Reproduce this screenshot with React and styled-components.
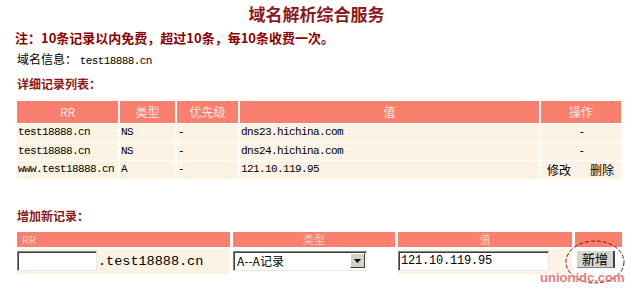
import React from "react";
import styled, { createGlobalStyle } from "styled-components";

const GlobalStyle = createGlobalStyle`
  body {
    margin: 0;
    background: #fff;
    font-family: "Noto Sans CJK SC", sans-serif;
  }
`;

const records = [
  { rr: "test18888.cn", type: "NS", prio: "-", value: "dns23.hichina.com", ops: false },
  { rr: "test18888.cn", type: "NS", prio: "-", value: "dns24.hichina.com", ops: false },
  { rr: "www.test18888.cn", type: "A", prio: "-", value: "121.10.119.95", ops: true },
];

export default function App() {
  return (
    <>
      <GlobalStyle />
      <Page>
        <Title>域名解析综合服务</Title>
        <Note>注：10条记录以内免费，超过10条，每10条收费一次。</Note>
        <Info>
          域名信息： <Mono>test18888.cn</Mono>
        </Info>
        <Section>详细记录列表：</Section>
        <RecordTable>
          <HeadCell>RR</HeadCell>
          <HeadCell>类型</HeadCell>
          <HeadCell>优先级</HeadCell>
          <HeadCell>值</HeadCell>
          <HeadCell>操作</HeadCell>
          {records.map((r, i) => (
            <React.Fragment key={i}>
              <Cell>{r.rr}</Cell>
              <Cell>{r.type}</Cell>
              <Cell>{r.prio}</Cell>
              <Cell>{r.value}</Cell>
              {r.ops ? (
                <OpsCell>
                  <OpLink>修改</OpLink>
                  <OpLink>删除</OpLink>
                </OpsCell>
              ) : (
                <Cell center>-</Cell>
              )}
            </React.Fragment>
          ))}
        </RecordTable>

        <Section top={29}>增加新记录：</Section>
        <AddTable>
          <AddHead left>RR</AddHead>
          <AddHead>类型</AddHead>
          <AddHead>值</AddHead>
          <AddHead />
          <AddCell>
            <TextBox width={80} />
            <Suffix>.test18888.cn</Suffix>
          </AddCell>
          <AddCell white>
            <FakeSelect>
              <span>A--A记录</span>
              <Arrow>
                <svg width="7" height="4" viewBox="0 0 7 4">
                  <path d="M0 0h7L3.5 4z" fill="#000" />
                </svg>
              </Arrow>
            </FakeSelect>
          </AddCell>
          <AddCell>
            <TextBox width={151} defaultValue="121.10.119.95" />
          </AddCell>
          <AddCell white>
            <AddButton>新增</AddButton>
          </AddCell>
        </AddTable>

        <Circle width="63" height="52" viewBox="0 0 63 52">
          <ellipse cx="32" cy="24" rx="29" ry="21" fill="none" stroke="#7a1212" strokeWidth="1" strokeDasharray="4 2" />
        </Circle>
        <Watermark>unionidc.com</Watermark>
      </Page>
    </>
  );
}

const Page = styled.div`
  position: relative;
  width: 625px;
  height: 289px;
  box-sizing: border-box;
  padding: 3px 3px 0 17px;
  overflow: hidden;
`;

const Title = styled.div`
  text-align: center;
  font-size: 17px;
  font-weight: 700;
  line-height: 22px;
  color: #8b1a1a;
  padding-right: 6px;
`;

const Note = styled.div`
  margin-top: 5px;
  margin-left: -2px;
  font-size: 13px;
  font-weight: 700;
  line-height: 16px;
  color: #8b0000;
`;

const Info = styled.div`
  margin-top: 5px;
  font-size: 12px;
  line-height: 16px;
  color: #000;
`;

const Mono = styled.span`
  font-family: "Liberation Mono", monospace;
  font-size: 11px;
  letter-spacing: -0.6px;
`;

const Section = styled.div`
  margin-top: ${(p) => p.top || 7}px;
  font-size: 12px;
  font-weight: 700;
  line-height: 16px;
  color: #8b1a1a;
`;

const RecordTable = styled.div`
  margin-top: 9px;
  display: grid;
  grid-template-columns: 101px 55px 61px 299px 80px;
  column-gap: 2px;
  row-gap: 1px;
`;

const HeadCell = styled.div`
  height: 22px;
  line-height: 22px;
  background: #f9806f;
  color: #fde8e4;
  font-size: 12px;
  text-align: center;
`;

const Cell = styled.div`
  height: 17.5px;
  line-height: 17.5px;
  background: #fcf3e5;
  padding-left: 1px;
  font-family: "Liberation Mono", "Noto Sans CJK SC", monospace;
  font-size: 11px;
  letter-spacing: -0.6px;
  color: #000;
  white-space: nowrap;
  text-align: ${(p) => (p.center ? "center" : "left")};
`;

const OpsCell = styled.div`
  height: 17.5px;
  background: #fcf3e5;
  display: flex;
  justify-content: space-between;
  align-items: center;
  padding: 0 7px 0 6px;
`;

const OpLink = styled.span`
  font-size: 12px;
  color: #000;
  cursor: pointer;
`;

const AddTable = styled.div`
  margin-top: 8px;
  display: grid;
  grid-template-columns: 213px 162px 174px 47px;
  column-gap: 3px;
  row-gap: 2px;
`;

const AddHead = styled.div`
  height: 15px;
  line-height: 15px;
  background: #f9806f;
  color: #fbd0c8;
  font-size: 11px;
  text-align: ${(p) => (p.left ? "left" : "center")};
  padding-left: ${(p) => (p.left ? "5px" : "0")};
`;

const AddCell = styled.div`
  height: 25px;
  box-sizing: border-box;
  padding-top: 2px;
  background: ${(p) => (p.white ? "#fff" : "#fcf3e5")};
  display: flex;
  align-items: flex-start;
`;

const TextBox = styled.input`
  width: ${(p) => p.width}px;
  height: 20px;
  box-sizing: border-box;
  margin: 0;
  padding: 0 2px;
  background: #fff;
  border: none;
  border-top: 1px solid #808080;
  border-left: 1px solid #808080;
  border-bottom: 1px solid #e8e8e8;
  border-right: 1px solid #e8e8e8;
  box-shadow: inset 1px 1px 0 #404040;
  font-family: "Liberation Mono", monospace;
  font-size: 12px;
  letter-spacing: -0.2px;
  color: #000;
  outline: none;
`;

const Suffix = styled.span`
  margin-left: 1px;
  font-family: "Liberation Mono", monospace;
  font-size: 13.5px;
  line-height: 22px;
  color: #000;
`;

const FakeSelect = styled.div`
  width: 134px;
  height: 20px;
  box-sizing: border-box;
  border-top: 1px solid #808080;
  border-left: 1px solid #808080;
  border-bottom: 1px solid #e8e8e8;
  border-right: 1px solid #e8e8e8;
  box-shadow: inset 1px 1px 0 #404040;
  background: #fff;
  display: flex;
  align-items: center;
  justify-content: space-between;
  padding: 0 1px 0 3px;
  font-size: 12px;
  color: #000;
`;

const Arrow = styled.div`
  width: 15px;
  height: 15px;
  box-sizing: border-box;
  background: #d4d0c8;
  border-top: 1px solid #fff;
  border-left: 1px solid #fff;
  border-bottom: 1px solid #404040;
  border-right: 1px solid #404040;
  display: flex;
  align-items: center;
  justify-content: center;
`;

const AddButton = styled.button`
  margin: 0 0 0 2px;
  width: 38px;
  height: 17px;
  padding: 0;
  background: #d8d5ce;
  border: none;
  border-right: 2px solid #404040;
  border-bottom: 1px solid #808080;
  font-family: "Noto Sans CJK SC", sans-serif;
  font-size: 13px;
  line-height: 15px;
  color: #000;
`;

const Circle = styled.svg`
  position: absolute;
  left: 563px;
  top: 238px;
`;

const Watermark = styled.div`
  position: absolute;
  left: 540px;
  top: 270px;
  font-family: "Liberation Sans", Arial, sans-serif;
  font-size: 13px;
  font-weight: 700;
  color: #e87c7c;
  white-space: nowrap;
`;
